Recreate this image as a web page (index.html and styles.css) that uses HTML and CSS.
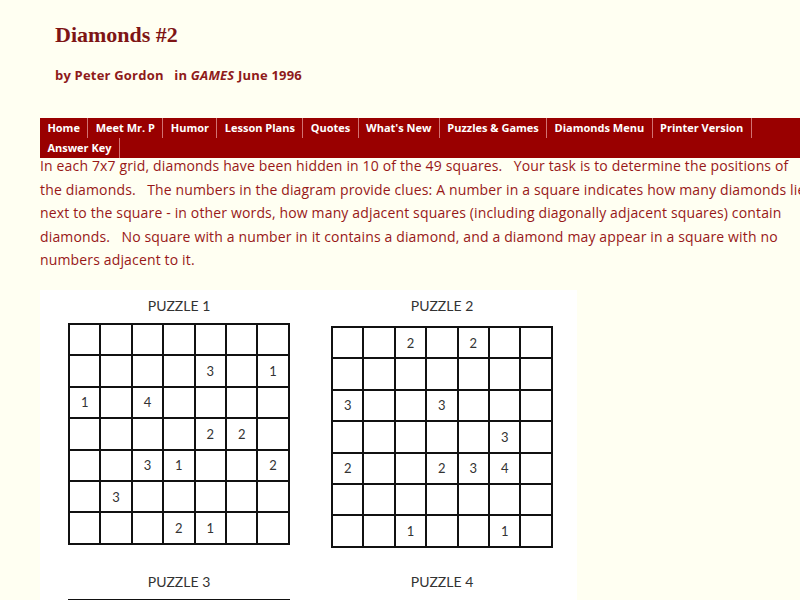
FILE: index.html
```html
<!DOCTYPE html>
<html>
<head>
<meta charset="utf-8">
<title>Diamonds #2</title>
<link rel="stylesheet" href="styles.css">
</head>
<body>
<div class="page">
  <h1 class="title">Diamonds #2</h1>
  <p class="byline">by Peter Gordon &nbsp; in <i>GAMES</i> June 1996</p>
  <ul class="nav">
    <li>Home</li>
    <li>Meet Mr. P</li>
    <li>Humor</li>
    <li>Lesson Plans</li>
    <li>Quotes</li>
    <li>What's New</li>
    <li>Puzzles &amp; Games</li>
    <li>Diamonds Menu</li>
    <li>Printer Version</li>
    <li class="break"></li>
    <li>Answer Key</li>
  </ul>
  <p class="intro">In each 7x7 grid, diamonds have been hidden in 10 of the 49 squares. &nbsp; Your task is to determine the positions of<br>the diamonds. &nbsp; The numbers in the diagram provide clues: A number in a square indicates how many diamonds lie<br>next to the square - in other words, how many adjacent squares (including diagonally adjacent squares) contain<br>diamonds. &nbsp; No square with a number in it contains a diamond, and a diamond may appear in a square with no<br>numbers adjacent to it.</p>
  <div class="puzzles">
    <div class="puzzle">
      <div class="ptitle">PUZZLE 1</div>
      <div class="grid">
        <span></span><span></span><span></span><span></span><span></span><span></span><span></span>
        <span></span><span></span><span></span><span></span><span>3</span><span></span><span>1</span>
        <span>1</span><span></span><span>4</span><span></span><span></span><span></span><span></span>
        <span></span><span></span><span></span><span></span><span>2</span><span>2</span><span></span>
        <span></span><span></span><span>3</span><span>1</span><span></span><span></span><span>2</span>
        <span></span><span>3</span><span></span><span></span><span></span><span></span><span></span>
        <span></span><span></span><span></span><span>2</span><span>1</span><span></span><span></span>
      </div>
    </div>
    <div class="puzzle second">
      <div class="ptitle">PUZZLE 2</div>
      <div class="grid">
        <span></span><span></span><span>2</span><span></span><span>2</span><span></span><span></span>
        <span></span><span></span><span></span><span></span><span></span><span></span><span></span>
        <span>3</span><span></span><span></span><span>3</span><span></span><span></span><span></span>
        <span></span><span></span><span></span><span></span><span></span><span>3</span><span></span>
        <span>2</span><span></span><span></span><span>2</span><span>3</span><span>4</span><span></span>
        <span></span><span></span><span></span><span></span><span></span><span></span><span></span>
        <span></span><span></span><span>1</span><span></span><span></span><span>1</span><span></span>
      </div>
    </div>
    <div class="puzzle">
      <div class="ptitle">PUZZLE 3</div>
      <div class="grid">
        <span></span><span></span><span></span><span></span><span></span><span></span><span></span>
        <span></span><span></span><span></span><span></span><span></span><span></span><span></span>
        <span></span><span></span><span></span><span></span><span></span><span></span><span></span>
      </div>
    </div>
    <div class="puzzle second">
      <div class="ptitle">PUZZLE 4</div>
      <div class="grid">
        <span></span><span></span><span></span><span></span><span></span><span></span><span></span>
        <span></span><span></span><span></span><span></span><span></span><span></span><span></span>
        <span></span><span></span><span></span><span></span><span></span><span></span><span></span>
      </div>
    </div>
  </div>
</div>
</body>
</html>
```

FILE: styles.css
```css
html {
  overflow: hidden;
}
body {
  margin: 0;
  background: #fffff2;
}
.page {
  padding-left: 40px;
  width: 800px;
}
.title {
  margin: 0;
  padding: 22px 0 0 15px;
  font-family: "Liberation Serif", serif;
  font-weight: bold;
  font-size: 22px;
  line-height: 26px;
  color: #7e1515;
}
.byline {
  margin: 0;
  padding: 18px 0 0 15px;
  font-family: "Open Sans", sans-serif;
  font-weight: bold;
  font-size: 13px;
  line-height: 18px;
  letter-spacing: 0.2px;
  color: #8e1a1a;
}
.nav {
  list-style: none;
  margin: 34px 0 0 0;
  padding: 0;
  display: flex;
  flex-wrap: wrap;
  background: #990000;
  width: 800px;
}
.nav li {
  font-family: "Open Sans", sans-serif;
  font-weight: bold;
  font-size: 11px;
  line-height: 20px;
  color: #ffffff;
  padding: 0 7.4px;
  border-right: 1px solid rgba(255, 210, 210, 0.55);
}
.nav li.break {
  flex-basis: 100%;
  height: 0;
  padding: 0;
  border: 0;
}
.intro {
  margin: -4px 0 0 0;
  font-family: "Open Sans", sans-serif;
  font-size: 14px;
  line-height: 23.6px;
  letter-spacing: 0.15px;
  white-space: nowrap;
  color: #981818;
}
.puzzles {
  margin-top: 18px;
  width: 537px;
  background: #ffffff;
  display: grid;
  grid-template-columns: 222px 222px;
  column-gap: 41px;
  row-gap: 25px;
  padding: 7px 0 0 28px;
  box-sizing: border-box;
}
.ptitle {
  font-family: Lato, sans-serif;
  font-size: 14px;
  line-height: 18px;
  color: #333333;
  text-align: center;
  margin-bottom: 8px;
}
.second .ptitle {
  margin-bottom: 11px;
}
.grid {
  display: grid;
  grid-template-columns: repeat(7, 29.4px);
  grid-auto-rows: 29.4px;
  gap: 2px;
  padding: 2px;
  background: #111111;
  width: max-content;
}
.grid span {
  background: #ffffff;
  display: flex;
  align-items: center;
  justify-content: center;
  font-family: Lato, sans-serif;
  font-size: 13px;
  color: #333333;
}
```
